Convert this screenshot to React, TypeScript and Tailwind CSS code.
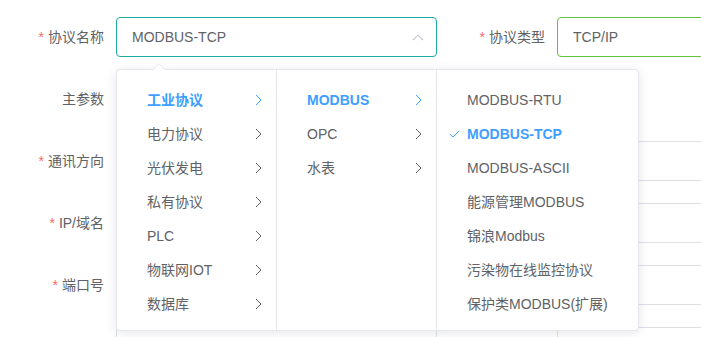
import React from "react"

const font = { fontFamily: '"Liberation Sans", "Noto Sans CJK SC", sans-serif' }

const Label = ({ text, required, width }: { text: string; required?: boolean; width: string }) => (
  <div className={`${width} shrink-0 pr-3 text-right text-sm text-[#606266]`}>
    {required && <span className="mr-1 text-[#f56c6c]">*</span>}
    {text}
  </div>
)

const Box = ({ value, border = "border-[#dcdfe6]", arrow }: { value?: string; border?: string; arrow?: boolean }) => (
  <div className={`relative flex h-10 w-full items-center rounded border ${border} bg-white px-[15px] text-sm text-[#606266]`}>
    {value}
    {arrow && (
      <svg className="absolute right-[12px] top-[16px]" width="12" height="7" viewBox="0 0 12 7">
        <path d="M1 6L6 1.2L11 6" fill="none" stroke="#c0c4cc" strokeWidth="1.1" />
      </svg>
    )}
  </div>
)

const Chevron = ({ active }: { active?: boolean }) => (
  <svg className="absolute right-[14px] top-[11px]" width="7" height="12" viewBox="0 0 7 12">
    <path d="M1 1L6 6L1 11" fill="none" stroke={active ? "#409eff" : "#606266"} strokeWidth="1" />
  </svg>
)

const col1 = ["工业协议", "电力协议", "光伏发电", "私有协议", "PLC", "物联网IOT", "数据库"]
const col2 = ["MODBUS", "OPC", "水表"]
const col3 = ["MODBUS-RTU", "MODBUS-TCP", "MODBUS-ASCII", "能源管理MODBUS", "锦浪Modbus", "污染物在线监控协议", "保护类MODBUS(扩展)"]

export default function App() {
  const rows = [
    { left: "协议名称", req: true, right: "协议类型" },
    { left: "主参数", req: false },
    { left: "通讯方向", req: true, rightBox: true },
    { left: "IP/域名", req: true, rightBox: true },
    { left: "端口号", req: true, rightBox: true },
    { left: "", req: false, rightBox: true },
  ]

  return (
    <div className="relative h-[337px] w-[701px] overflow-hidden bg-white" style={font}>
      <div className="flex flex-col gap-[22px] pt-[17px]">
        {rows.map((r, i) => (
          <div key={i} className="flex h-10 items-center">
            <Label text={r.left} required={r.req} width="w-[116px]" />
            <div className="w-[321px] shrink-0">
              {i === 0 ? <Box value="MODBUS-TCP" border="border-[#1aad9f]" arrow /> : <Box />}
            </div>
            {i === 0 ? (
              <>
                <Label text={r.right!} required width="w-[120px]" />
                <div className="w-[200px] shrink-0">
                  <Box value="TCP/IP" border="border-[#67c23a]" />
                </div>
              </>
            ) : r.rightBox ? (
              <>
                <div className="w-[120px] shrink-0" />
                <div className="w-[200px] shrink-0">
                  <Box />
                </div>
              </>
            ) : null}
          </div>
        ))}
      </div>

      {/* cascader dropdown */}
      <div className="absolute left-[116px] top-[69px] flex h-[262px] w-[523px] rounded border border-[#e4e7ed] bg-white shadow-[0_2px_12px_rgba(0,0,0,0.1)]">
        <svg className="absolute left-[35px] top-[-7px]" width="14" height="8" viewBox="0 0 14 8">
          <path d="M0 7.5L7 0.8L14 7.5" fill="white" stroke="#e4e7ed" strokeWidth="1" />
          <rect x="0" y="7" width="14" height="1" fill="white" />
        </svg>
        <div className="h-full w-[160px] border-r border-[#e4e7ed] pt-[13px]">
          {col1.map((t, i) => (
            <div key={t} className={`relative flex h-[34px] items-center pl-[30px] text-sm ${i === 0 ? "font-bold text-[#409eff]" : "text-[#606266]"}`}>
              {t}
              <Chevron active={i === 0} />
            </div>
          ))}
        </div>
        <div className="h-full w-[160px] border-r border-[#e4e7ed] pt-[13px]">
          {col2.map((t, i) => (
            <div key={t} className={`relative flex h-[34px] items-center pl-[30px] text-sm ${i === 0 ? "font-bold text-[#409eff]" : "text-[#606266]"}`}>
              {t}
              <Chevron active={i === 0} />
            </div>
          ))}
        </div>
        <div className="h-full flex-1 pt-[13px]">
          {col3.map((t, i) => (
            <div key={t} className={`relative flex h-[34px] items-center pl-[30px] text-sm ${i === 1 ? "font-bold text-[#409eff]" : "text-[#606266]"}`}>
              {i === 1 && (
                <svg className="absolute left-[12px] top-[13px]" width="11" height="8" viewBox="0 0 11 8">
                  <path d="M0.8 4L4 7L10.2 0.8" fill="none" stroke="#409eff" strokeWidth="1" />
                </svg>
              )}
              {t}
            </div>
          ))}
        </div>
      </div>
    </div>
  )
}
